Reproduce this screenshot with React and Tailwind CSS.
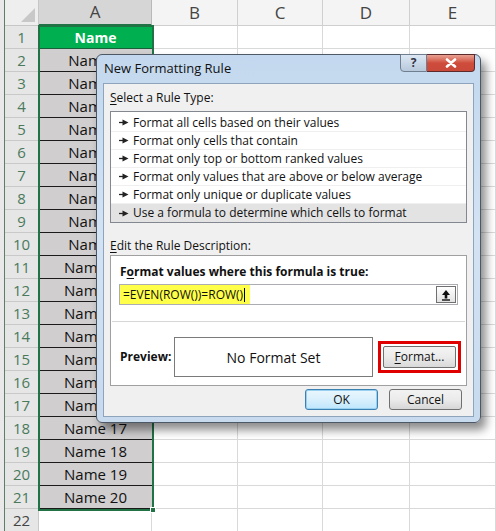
import React from 'react';

const otherCols = [
  { label: 'B', w: 'w-[86px]' },
  { label: 'C', w: 'w-[85px]' },
  { label: 'D', w: 'w-[87px]' },
  { label: 'E', w: 'w-[86px]' },
];

const ruleTypes = [
  'Format all cells based on their values',
  'Format only cells that contain',
  'Format only top or bottom ranked values',
  'Format only values that are above or below average',
  'Format only unique or duplicate values',
  'Use a formula to determine which cells to format',
];

function Arrow() {
  return (
    <svg width="10" height="7" viewBox="0 0 10 7" className="shrink-0">
      <path d="M0 3.5h4" stroke="#222" strokeWidth="1.3" />
      <path d="M3.5 0.5L9.5 3.5L3.5 6.5Z" fill="#222" />
    </svg>
  );
}

function Sheet() {
  const rows = Array.from({ length: 22 }, (_, i) => i + 1);
  return (
    <div className="flex flex-col font-['Open_Sans',sans-serif]">
      {/* column headers */}
      <div className="flex h-[26px]">
        <div className="w-[5px] bg-[#e9e9e9] border-r border-[#5b7f68]" />
        <div className="w-[34px] bg-[#eeeeee] border-r border-b border-[#c6c6c6] flex items-end justify-end p-[3px]">
          <svg width="14" height="14" viewBox="0 0 14 14">
            <path d="M14 0L14 14L0 14Z" fill="#c8c8c8" />
          </svg>
        </div>
        <div className="w-[113px] bg-[#d6d6d6] border-r border-[#b9b9b9] border-b-2 border-b-[#217346] flex items-center justify-center text-[17px] text-[#444]">
          A
        </div>
        {otherCols.map((c) => (
          <div
            key={c.label}
            className={`${c.w} bg-[#f4f4f4] border-r border-b border-[#cfcfcf] flex items-center justify-center text-[17px] text-[#444]`}
          >
            {c.label}
          </div>
        ))}
      </div>
      {rows.map((r) => (
        <div key={r} className="flex h-[23px]">
          <div className="w-[5px] bg-[#e9e9e9] border-r border-[#5b7f68]" />
          <div
            className={`w-[34px] bg-[#e6e6e6] border-r border-b border-[#c9c9c9] flex items-center justify-center text-[15px] ${
              r <= 21 ? 'text-[#4a7a5c]' : 'text-[#444]'
            }`}
          >
            {r}
          </div>
          {r === 1 ? (
            <div className="w-[113px] bg-[#00b050] border-b border-[#1d5e3a] flex items-center justify-center text-[14px] font-bold text-white">
              Name
            </div>
          ) : r <= 21 ? (
            <div className="w-[113px] bg-[#d0cece] border-b border-[#1a1a1a] flex items-center justify-center text-[15px] text-[#111]">
              Name {r - 1}
            </div>
          ) : (
            <div className="w-[113px] border-r border-b border-[#d9d9d9]" />
          )}
          {otherCols.map((c) => (
            <div key={c.label} className={`${c.w} border-r border-b border-[#d9d9d9]`} />
          ))}
        </div>
      ))}
    </div>
  );
}

function Dialog() {
  return (
    <div className="absolute left-[96px] top-[54px] w-[385px] h-[369px] rounded-[6px] border border-[#4d5866] bg-gradient-to-b from-[#c3d8ee] via-[#d3e3f4] to-[#c7daee] shadow-[5px_7px_10px_rgba(0,0,0,0.45)] flex flex-col font-['Open_Sans',sans-serif] text-[#111]">
      {/* title bar */}
      <div className="h-[28px] flex items-start justify-between">
        <div className="pl-[7px] pt-[4px] text-[13px] text-[#111]">New Formatting Rule</div>
        <div className="flex mr-[5px] -mt-px">
          <div className="w-[27px] h-[18px] rounded-bl-[4px] border border-[#6f7f90] bg-gradient-to-b from-[#dce7f3] to-[#b7c9dc] flex items-center justify-center text-[12px] text-[#334] font-bold">
            ?
          </div>
          <div className="w-[48px] h-[18px] rounded-br-[4px] border border-l-0 border-[#5c2a2a] bg-gradient-to-b from-[#e8a093] via-[#cf4c3c] to-[#c9493a] flex items-center justify-center">
            <svg width="12" height="10" viewBox="0 0 12 10">
              <path d="M2 1.5L10 8.5M10 1.5L2 8.5" stroke="#fff" strokeWidth="2.6" strokeLinecap="round" />
            </svg>
          </div>
        </div>
      </div>
      {/* client area */}
      <div className="mx-[6px] mb-[5px] flex-1 bg-[#f0f0f0] border border-[#8ea4bd] px-[6px] text-[12px]">
        <div className="pt-[5px] h-[27px]">
          <span className="underline underline-offset-2">S</span>elect a Rule Type:
        </div>
        <div className="h-[112px] bg-white border border-[#828790] flex flex-col pt-[2px]">
          {ruleTypes.map((t, i) => (
            <div
              key={t}
              className={`h-[18px] flex items-center gap-[4px] pl-[8px] ${
                i === 5 ? 'bg-[#e3e3e3]' : 'border-b border-[#efefef]'
              }`}
            >
              <Arrow />
              <span>{t}</span>
            </div>
          ))}
        </div>
        <div className="pt-[14px] h-[32px]">
          <span className="underline underline-offset-2">E</span>dit the Rule Description:
        </div>
        <div className="h-[131px] bg-white border border-[#a0a0a0] flex flex-col">
          <div className="pl-[9px] pt-[7px] font-bold h-[28px]">
            F<span className="underline underline-offset-2">o</span>rmat values where this formula is true:
          </div>
          <div className="mx-[8px] h-[21px] border border-[#abadb3] flex items-stretch">
            <div className="flex-1 flex items-center">
              <span className="bg-[#ffff4a] h-full flex items-center pl-[3px] pr-[5px]">
                =EVEN(ROW())=ROW()
                <span className="inline-block w-px h-[14px] bg-black ml-px" />
              </span>
            </div>
            <div className="w-[20px] my-px mr-px border border-[#707070] bg-gradient-to-b from-white to-[#e3e3e3] flex items-center justify-center">
              <svg width="10" height="12" viewBox="0 0 10 12">
                <path d="M5 1L9 6H6.3V9.5H3.7V6H1Z" fill="#111" />
                <path d="M1 11h8" stroke="#111" strokeWidth="1.4" />
              </svg>
            </div>
          </div>
          <div className="mt-[16px] mx-px border-t border-[#d6d6d6]" />
          <div className="flex items-center pt-[15px]">
            <div className="w-[63px] pl-[9px] font-bold">Preview:</div>
            <div className="w-[199px] h-[40px] border border-[#7a7a7a] bg-white flex items-center justify-center text-[14px]">
              No Format Set
            </div>
            <div className="ml-[5px] w-[83px] h-[32px] border-[3px] border-[#e00000] flex items-center justify-center">
              <div className="w-[73px] h-[22px] border border-[#707070] rounded-[2px] bg-gradient-to-b from-[#f4f4f4] via-[#ebebeb] to-[#d9d9d9] flex items-center justify-center">
                <span>
                  <span className="underline underline-offset-2">F</span>ormat...
                </span>
              </div>
            </div>
          </div>
        </div>
        <div className="flex justify-end gap-[11px] pt-[3px] pr-[5px]">
          <div className="w-[73px] h-[21px] border border-[#3c7fb1] rounded-[3px] bg-gradient-to-b from-[#eaf6fd] via-[#d9f0fc] to-[#bee6fd] shadow-[inset_0_0_0_1px_#98d1ef] flex items-center justify-center">
            OK
          </div>
          <div className="w-[73px] h-[21px] border border-[#707070] rounded-[3px] bg-gradient-to-b from-[#f2f2f2] via-[#ebebeb] to-[#d6d6d6] flex items-center justify-center">
            Cancel
          </div>
        </div>
      </div>
    </div>
  );
}

export default function App() {
  return (
    <div className="relative w-[496px] h-[531px] overflow-hidden bg-white">
      <Sheet />
      {/* selection outline around A1:A21 */}
      <div className="absolute left-[38px] top-[25px] w-[116px] h-[486px] border-2 border-[#217346] pointer-events-none" />
      <div className="absolute left-[150px] top-[507px] w-[6px] h-[6px] bg-[#217346] border border-white" />
      <Dialog />
    </div>
  );
}
